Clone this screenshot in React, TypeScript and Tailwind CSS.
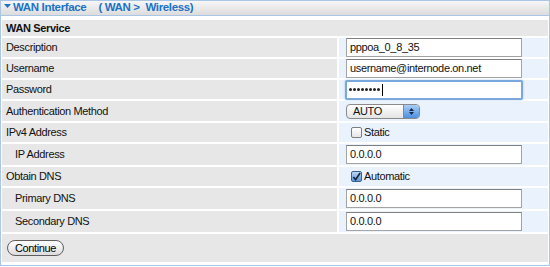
import React from "react";

const font = { fontFamily: '"Liberation Sans", Arial, sans-serif' };

function Row({
  label,
  indent,
  h,
  children,
}: {
  label: string;
  indent?: boolean;
  h: string;
  children?: React.ReactNode;
}) {
  return (
    <div className={`flex gap-[2px] ${h}`}>
      <div
        className={`w-[335px] shrink-0 bg-[#e7e7e7] flex items-center ${
          indent ? "pl-[13px]" : "pl-[4px]"
        }`}
      >
        {label}
      </div>
      <div className="flex-1 bg-[#eaf2fd] flex items-center pl-[7px]">{children}</div>
    </div>
  );
}

function TextInput({ value }: { value: string }) {
  return (
    <div className="w-[176px] h-[19px] bg-white flex items-center pl-[3px] text-[11px] border border-[#a3a3a3] border-t-[#7f7f7f]">
      {value}
    </div>
  );
}

function Checkbox({ checked }: { checked?: boolean }) {
  return (
    <div
      className={`w-[11px] h-[11px] rounded-[2px] border flex items-center justify-center ${
        checked
          ? "border-[#3a5f8a] bg-gradient-to-b from-[#bcd7f5] to-[#5c97dc]"
          : "border-[#7d7d7d] bg-gradient-to-b from-white to-[#e6e6e6]"
      }`}
    >
      {checked && (
        <svg width="10" height="10" viewBox="0 0 10 10">
          <path d="M1.5 5 L4 8 L9 0.5" fill="none" stroke="#16233a" strokeWidth="1.8" />
        </svg>
      )}
    </div>
  );
}

export default function App() {
  const dots = [0, 1, 2, 3, 4, 5, 6, 7];
  return (
    <div style={font} className="w-[550px] h-[267px] bg-white text-[11px] tracking-[-0.35px] text-[#111]">
      <div className="border border-[#a9c7e5] h-[266px]">
        <div className="h-[15px] bg-gradient-to-b from-[#f7f7f7] to-[#dcdcdc] border-b border-[#a9c7e5] flex items-center text-[#1d72c6] font-bold text-[11.5px]">
          <svg width="8" height="6" viewBox="0 0 8 6" className="ml-[3px] mr-[1px] mb-[3px]">
            <path d="M0 0 H7 L3.5 4 Z" fill="#1d72c6" />
          </svg>
          <span>WAN Interface</span>
          <span className="ml-[12px]">( WAN &gt;&nbsp; Wireless)</span>
        </div>
        <div className="px-[1px] pt-[4px] flex flex-col gap-[2px]">
          <div className="h-[16px] bg-[#e7e7e7] flex items-center pl-[4px] font-bold">WAN Service</div>
          <Row label="Description" h="h-[19px]">
            <TextInput value="pppoa_0_8_35" />
          </Row>
          <Row label="Username" h="h-[19px]">
            <TextInput value="username@internode.on.net" />
          </Row>
          <Row label="Password" h="h-[19px]">
            <div className="-ml-[1px] w-[178px] h-[20px] bg-white flex items-center pl-[2px] border-2 border-[#7aa8dc] shadow-[0_0_2px_#9cc0ea] rounded-[2px]">
              <div className="flex items-center gap-[1px]">
                {dots.map((d) => (
                  <span key={d} className="w-[3px] h-[3px] rounded-full bg-[#222]" />
                ))}
              </div>
              <span className="ml-[2px] w-[1px] h-[12px] bg-black" />
            </div>
          </Row>
          <Row label="Authentication Method" h="h-[20px]">
            <div className="w-[74px] h-[15px] rounded-[4px] border border-[#8a8a8a] bg-gradient-to-b from-white to-[#e4e4e4] flex items-center overflow-hidden">
              <span className="pl-[6px] flex-1">AUTO</span>
              <div className="w-[16px] h-full bg-gradient-to-b from-[#a8cdf5] to-[#4d8fe0] border-l border-[#6b8db5] flex flex-col items-center justify-center gap-[1px]">
                <svg width="5" height="3" viewBox="0 0 5 3">
                  <path d="M0 3 L2.5 0 L5 3 Z" fill="#1a2a45" />
                </svg>
                <svg width="5" height="3" viewBox="0 0 5 3">
                  <path d="M0 0 L2.5 3 L5 0 Z" fill="#1a2a45" />
                </svg>
              </div>
            </div>
          </Row>
          <Row label="IPv4 Address" h="h-[19px]">
            <div className="flex items-center gap-[2px] pl-[5px]">
              <Checkbox />
              <span>Static</span>
            </div>
          </Row>
          <Row label="IP Address" indent h="h-[21px]">
            <TextInput value="0.0.0.0" />
          </Row>
          <Row label="Obtain DNS" h="h-[19px]">
            <div className="flex items-center gap-[2px] pl-[5px]">
              <Checkbox checked />
              <span>Automatic</span>
            </div>
          </Row>
          <Row label="Primary DNS" indent h="h-[21px]">
            <TextInput value="0.0.0.0" />
          </Row>
          <Row label="Secondary DNS" indent h="h-[21px]">
            <TextInput value="0.0.0.0" />
          </Row>
          <div className="h-[28px] bg-[#e7e7e7] flex items-center pl-[5px]">
            <button className="h-[16px] w-[57px] rounded-full border border-[#5e5e5e] bg-gradient-to-b from-white to-[#dcdcdc] flex items-center justify-center text-[11px] text-black leading-none">
              Continue
            </button>
          </div>
        </div>
      </div>
    </div>
  );
}
